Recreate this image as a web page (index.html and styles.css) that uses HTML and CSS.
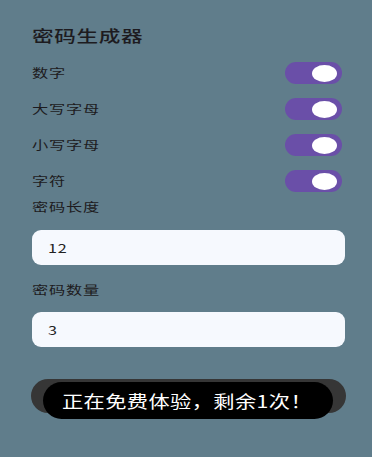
FILE: index.html
```html
<!DOCTYPE html>
<html lang="zh">
<head>
<meta charset="utf-8">
<title>密码生成器</title>
<link rel="stylesheet" href="styles.css">
</head>
<body>
<div class="page">
  <div class="title"><span class="wide">密码生成器</span></div>
  <div class="row"><span class="label wide">数字</span><span class="switch"><span class="knob"></span></span></div>
  <div class="row"><span class="label wide">大写字母</span><span class="switch"><span class="knob"></span></span></div>
  <div class="row"><span class="label wide">小写字母</span><span class="switch"><span class="knob"></span></span></div>
  <div class="row"><span class="label wide">字符</span><span class="switch"><span class="knob"></span></span></div>
  <div class="field-label"><span class="wide">密码长度</span></div>
  <div class="input"><span class="wide">12</span></div>
  <div class="field-label second"><span class="wide">密码数量</span></div>
  <div class="input"><span class="wide">3</span></div>
  <div class="button-wrap">
    <div class="button"></div>
    <div class="toast"><span class="wide-t">正在免费体验，剩余1次！</span></div>
  </div>
</div>
</body>
</html>
```
FILE: styles.css
```css
html, body {
  margin: 0;
  padding: 0;
  background: #607d8b;
}
body {
  font-family: "Noto Sans CJK SC", "Noto Sans", sans-serif;
  color: #1d1b20;
  width: 372px;
  height: 457px;
  overflow: hidden;
}
.page {
  padding: 24px 27px 0 32px;
}
.wide {
  display: inline-block;
  transform: scaleX(1.35);
  transform-origin: left center;
}
.wide-t {
  display: inline-block;
  transform: scaleX(1.25);
  transform-origin: left center;
}
.title {
  font-size: 16px;
  line-height: 22px;
  font-weight: 500;
  letter-spacing: 0.5px;
  height: 22px;
  margin-bottom: 9px;
}
.row {
  display: flex;
  justify-content: space-between;
  align-items: center;
  height: 36px;
}
.label, .field-label {
  font-size: 12px;
  letter-spacing: 0.6px;
  line-height: 16px;
}
.switch {
  width: 57px;
  height: 22px;
  border-radius: 11px;
  background: #6a4fa8;
  display: flex;
  align-items: center;
  justify-content: flex-end;
  padding-right: 5px;
  box-sizing: border-box;
  margin-right: 3px;
}
.knob {
  width: 25px;
  height: 17px;
  border-radius: 50%;
  background: #ffffff;
}
.field-label {
  height: 16px;
}
.field-label.second {
  margin-top: 17px;
}
.input {
  margin-top: 15px;
  height: 35px;
  border-radius: 9px;
  background: #f6f9fe;
  display: flex;
  align-items: center;
  padding-left: 16px;
  font-size: 12px;
  letter-spacing: 0.5px;
  color: #222;
}
.field-label.second + .input {
  margin-top: 14px;
}
.button-wrap {
  position: relative;
  margin-top: 32px;
  margin-left: -1px;
  margin-right: -1px;
}
.button {
  height: 34px;
  border-radius: 17px;
  background: #363636;
}
.toast {
  position: absolute;
  top: 3px;
  left: 12px;
  width: 290px;
  height: 37px;
  border-radius: 19px;
  background: #000;
  color: #fff;
  font-size: 17px;
  letter-spacing: 0.3px;
  line-height: 37px;
  padding-left: 19px;
  box-sizing: border-box;
  white-space: nowrap;
}
```
